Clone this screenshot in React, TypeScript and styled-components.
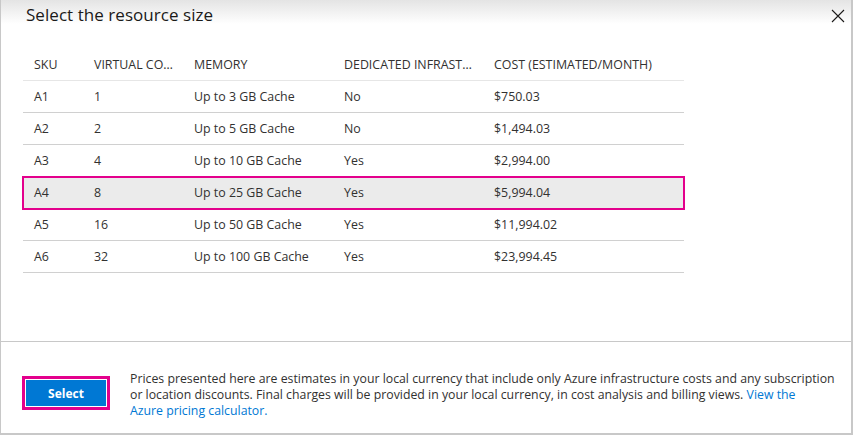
import React from 'react';
import styled, { createGlobalStyle } from 'styled-components';

const GlobalStyle = createGlobalStyle`
    html, body {
        margin: 0;
        padding: 0;
        background: #ffffff;
    }
    body {
        font-family: "Open Sans", "Liberation Sans", sans-serif;
        color: #323130;
    }
    * {
        box-sizing: border-box;
    }
`;

const Panel = styled.div`
    width: 853px;
    height: 435px;
    border: 1px solid #c8c8c8;
    border-top: none;
    border-right-width: 2px;
    border-bottom-width: 2px;
    background: linear-gradient(#e4e4e4 0px, #ffffff 24px);
    display: flex;
    flex-direction: column;
`;

const Header = styled.div`
    display: flex;
    justify-content: space-between;
    align-items: flex-start;
    height: 48px;
    padding: 3px 6px 0 25px;
`;

const Title = styled.h1`
    margin: 0;
    font-size: 17px;
    font-weight: 400;
    color: #1b1a19;
    letter-spacing: 0.05px;
`;

const CloseButton = styled.button`
    border: none;
    background: transparent;
    padding: 0;
    margin-top: 6px;
    width: 14px;
    height: 14px;
    cursor: pointer;
`;

const Body = styled.div`
    flex: 1;
    padding: 0 0 0 22px;
`;

const Table = styled.div`
    width: 661px;
    display: flex;
    flex-direction: column;
`;

const Row = styled.div<{ $head?: boolean; $selected?: boolean }>`
    display: grid;
    grid-template-columns: 60px 100px 150px 150px 1fr;
    height: ${p => (p.$head ? '33px' : '32px')};
    align-items: center;
    border-bottom: 1px solid ${p => (p.$head ? '#e6e6e6' : '#d0d0d0')};
    font-size: 12.4px;
    background: ${p => (p.$selected ? '#ebebeb' : 'transparent')};
    outline: ${p => (p.$selected ? '2px solid #e3008c' : 'none')};
    outline-offset: -1px;
`;

const Cell = styled.div<{ $head?: boolean }>`
    padding-left: 11px;
    padding-right: ${p => (p.$head ? '8px' : '0')};
    white-space: nowrap;
    overflow: hidden;
    text-overflow: ellipsis;
    color: #323130;
`;

const Footer = styled.div`
    height: 92px;
    border-top: 1px solid #c8c8c8;
    display: flex;
    align-items: flex-start;
    padding: 29px 8px 0 21px;
    gap: 20px;
`;

const Highlight = styled.div`
    border: 3px solid #e3008c;
    padding: 1px;
    margin-top: 5px;
`;

const PrimaryButton = styled.button`
    display: block;
    width: 80px;
    height: 26px;
    border: none;
    background: #0078d4;
    color: #ffffff;
    font-family: "Open Sans", "Liberation Sans", sans-serif;
    font-weight: 700;
    font-size: 12px;
    cursor: pointer;
`;

const Note = styled.p`
    margin: 0;
    font-size: 12.3px;
    line-height: 16px;
    white-space: nowrap;
    color: #323130;
`;

const Link = styled.a`
    color: #0078d4;
    text-decoration: none;
`;

type Sku = {
    sku: string;
    cores: string;
    memory: string;
    dedicated: string;
    cost: string;
};

const rows: Sku[] = [
    { sku: 'A1', cores: '1', memory: 'Up to 3 GB Cache', dedicated: 'No', cost: '$750.03' },
    { sku: 'A2', cores: '2', memory: 'Up to 5 GB Cache', dedicated: 'No', cost: '$1,494.03' },
    { sku: 'A3', cores: '4', memory: 'Up to 10 GB Cache', dedicated: 'Yes', cost: '$2,994.00' },
    { sku: 'A4', cores: '8', memory: 'Up to 25 GB Cache', dedicated: 'Yes', cost: '$5,994.04' },
    { sku: 'A5', cores: '16', memory: 'Up to 50 GB Cache', dedicated: 'Yes', cost: '$11,994.02' },
    { sku: 'A6', cores: '32', memory: 'Up to 100 GB Cache', dedicated: 'Yes', cost: '$23,994.45' },
];

const columns = ['SKU', 'VIRTUAL CORES', 'MEMORY', 'DEDICATED INFRASTRUCTURE', 'COST (ESTIMATED/MONTH)'];

function App(): JSX.Element {
    const selected = 'A4';

    return (
        <>
            <GlobalStyle />
            <Panel>
                <Header>
                    <Title>Select the resource size</Title>
                    <CloseButton aria-label="Close">
                        <svg width="14" height="14" viewBox="0 0 14 14">
                            <path d="M1 1 L13 13 M13 1 L1 13" stroke="#1b1a19" strokeWidth="1.1" />
                        </svg>
                    </CloseButton>
                </Header>
                <Body>
                    <Table>
                        <Row $head>
                            {columns.map(c => (
                                <Cell $head key={c}>{c}</Cell>
                            ))}
                        </Row>
                        {rows.map(r => (
                            <Row key={r.sku} $selected={r.sku === selected}>
                                <Cell>{r.sku}</Cell>
                                <Cell>{r.cores}</Cell>
                                <Cell>{r.memory}</Cell>
                                <Cell>{r.dedicated}</Cell>
                                <Cell>{r.cost}</Cell>
                            </Row>
                        ))}
                    </Table>
                </Body>
                <Footer>
                    <Highlight>
                        <PrimaryButton>Select</PrimaryButton>
                    </Highlight>
                    <Note>
                        Prices presented here are estimates in your local currency that include only Azure infrastructure costs and any subscription
                        <br />
                        or location discounts. Final charges will be provided in your local currency, in cost analysis and billing views.{' '}
                        <Link href="#">
                            View the
                            <br />
                            Azure pricing calculator.
                        </Link>
                    </Note>
                </Footer>
            </Panel>
        </>
    );
}

export default App;
